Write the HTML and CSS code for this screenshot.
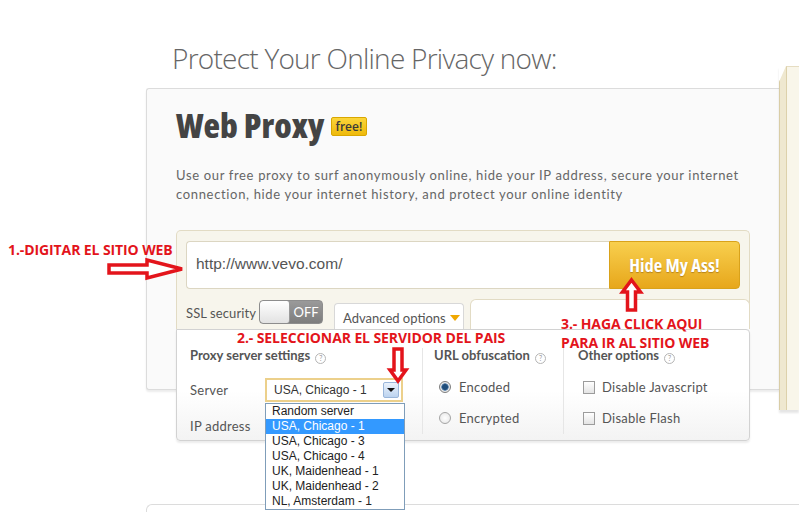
FILE: index.html
```html
<!DOCTYPE html>
<html lang="en">
<head>
  <meta charset="UTF-8" />
  <meta name="viewport" content="width=device-width, initial-scale=1.0" />
  <title>Web Proxy | Protect Your Online Privacy</title>
  <link rel="stylesheet" href="styles.css">
</head>
<body>
  <div class="page">
    <div class="stage">
      <div class="main-col">
        <h2 class="tagline">Protect Your Online Privacy now:</h2>

        <section class="proxy-panel">
          <h1 class="proxy-title">Web Proxy<span class="badge">free!</span></h1>
          <p class="intro">Use our free proxy to surf anonymously online, hide your IP address, secure your internet<br>connection, hide your internet history, and protect your online identity</p>

          <form class="surf-box">
            <div class="url-row">
              <input class="url-input" type="text" value="http://www.vevo.com/" />
              <button class="go-btn" type="button">Hide My Ass!</button>
            </div>
            <div class="option-row">
              <span class="ssl-label">SSL security</span>
              <span class="toggle"><span class="knob"></span><span class="off">OFF</span></span>
              <span class="adv-tab">Advanced options <span class="caret"></span></span>
              <span class="tab-fill"></span>
            </div>
          </form>

          <div class="settings">
            <div class="col col-server">
              <h4>Proxy server settings <i class="help">?</i></h4>
              <div class="field">
                <span class="field-label">Server</span>
                <div class="select">
                  <span>USA, Chicago - 1</span>
                  <span class="drop-btn"></span>
                  <ul class="menu">
                    <li>Random server</li>
                    <li class="active">USA, Chicago - 1</li>
                    <li>USA, Chicago - 3</li>
                    <li>USA, Chicago - 4</li>
                    <li>UK, Maidenhead - 1</li>
                    <li>UK, Maidenhead - 2</li>
                    <li>NL, Amsterdam - 1</li>
                  </ul>
                </div>
              </div>
              <div class="field field-ip">
                <span class="field-label">IP address</span>
              </div>
            </div>
            <div class="col col-url">
              <h4>URL obfuscation <i class="help">?</i></h4>
              <div class="opt"><span class="radio checked"></span>Encoded</div>
              <div class="opt"><span class="radio"></span>Encrypted</div>
            </div>
            <div class="col col-other">
              <h4>Other options <i class="help">?</i></h4>
              <div class="opt"><span class="check"></span>Disable Javascript</div>
              <div class="opt"><span class="check"></span>Disable Flash</div>
            </div>
          </div>
        </section>
      </div>

      <div class="side-card">
        <span class="side-edge"></span>
        <span class="side-face"></span>
      </div>
    </div>

    <section class="works">
      <h2>How it works</h2>
    </section>

    <!-- red notes drawn over the screenshot -->
    <div class="note note-1">1.-DIGITAR EL SITIO WEB</div>
    <svg class="arrow arrow-1" width="82" height="26" viewBox="0 0 82 26">
      <path d="M4 9 H42 V4 L77 13 L42 22 V17 H4 Z" />
    </svg>

    <div class="note note-2">2.- SELECCIONAR EL SERVIDOR DEL PAIS</div>
    <svg class="arrow arrow-2" width="24" height="40" viewBox="0 0 24 40">
      <path d="M8 4 H16 V25 H20 L12 36 L4 25 H8 Z" />
    </svg>

    <div class="note note-3">3.- HAGA CLICK AQUI<br>PARA IR AL SITIO WEB</div>
    <svg class="arrow arrow-3" width="27" height="38" viewBox="0 0 27 38">
      <path d="M13.5 4 L22.5 16 H17.5 V34 H9.5 V16 H4.5 Z" />
    </svg>
  </div>
</body>
</html>
```

FILE: styles.css
```css
:root {
  --text: #555;
  --muted: #666;
  --line: #dcdcdc;
  --beige: #f7f5ec;
  --beige-line: #e2dbc4;
  --gold-top: #f8cf4e;
  --gold-bottom: #e7a71b;
  --note-red: #e3141b;
}

body {
  margin: 0;
  background: #fff;
  font-family: 'Lato', 'Open Sans', sans-serif;
  color: var(--text);
  overflow: hidden;
}

.page {
  position: relative;
  width: 799px;
  height: 512px;
  padding-left: 146px;
  box-sizing: border-box;
  overflow: hidden;
}

.stage {
  display: flex;
  align-items: flex-start;
}

.main-col {
  width: 633px;
  flex: none;
}

.tagline {
  margin: 0 0 12px;
  padding: 40px 0 0 26px;
  font-family: 'Open Sans', sans-serif;
  font-weight: 300;
  font-size: 28px;
  line-height: 36px;
  letter-spacing: -0.75px;
  color: #666;
}

.proxy-panel {
  height: 302px;
  box-sizing: border-box;
  padding: 16px 0 0 29px;
  background: #fafafa;
  border: 1px solid var(--line);
  border-right: none;
  border-radius: 3px 0 0 3px;
  box-shadow: 0 2px 2px rgba(0, 0, 0, 0.08);
}

.proxy-title {
  margin: 0;
  font-family: 'Open Sans', sans-serif;
  font-stretch: 75%;
  font-weight: 800;
  font-size: 34px;
  line-height: 40px;
  color: #444;
}

.badge {
  display: inline-block;
  margin-left: 6px;
  padding: 0 4px;
  height: 17px;
  line-height: 17px;
  font-family: 'Open Sans', sans-serif;
  font-stretch: 100%;
  font-size: 12px;
  font-weight: 600;
  color: #3a3a3a;
  background: linear-gradient(#fbd53a, #eeb90b);
  border: 1px solid #d9a700;
  border-radius: 2px;
  vertical-align: 7px;
}

.intro {
  margin: 21px 0 0;
  font-size: 13px;
  line-height: 19px;
  color: var(--muted);
  letter-spacing: 0.66px;
}

.surf-box {
  width: 574px;
  box-sizing: border-box;
  margin-top: 26px;
  padding: 10px 9px 0;
  background: var(--beige);
  border: 1px solid var(--beige-line);
  border-bottom: none;
  border-radius: 5px 5px 0 0;
}

.url-row {
  display: flex;
  height: 48px;
}

.url-input {
  width: 423px;
  box-sizing: border-box;
  padding: 0 0 2px 9px;
  border: 1px solid #dcd6c2;
  border-right: none;
  border-radius: 4px 0 0 4px;
  background: #fff;
  font-family: 'Liberation Sans', Arial, sans-serif;
  font-size: 15.5px;
  color: #555;
  outline: none;
}

.go-btn {
  flex: 1;
  border: 1px solid #d9a21a;
  border-radius: 0 4px 4px 0;
  background: linear-gradient(var(--gold-top), var(--gold-bottom));
  font-family: 'Open Sans', sans-serif;
  font-stretch: 75%;
  font-size: 18.5px;
  font-weight: bold;
  color: #fff;
  text-shadow: 0 1px 1px rgba(120, 70, 0, 0.45);
  padding: 0 0 2px;
}

.option-row {
  display: flex;
  align-items: flex-end;
  height: 40px;
}

.ssl-label {
  margin-bottom: 8px;
  font-size: 13px;
  line-height: 16px;
  letter-spacing: 0.1px;
}

.toggle {
  display: flex;
  width: 64px;
  height: 24px;
  box-sizing: border-box;
  margin: 0 0 5px 3px;
  border: 1px solid #8d8d8d;
  border-radius: 4px;
  background: linear-gradient(#9a9a9a, #7d7d7d);
  overflow: hidden;
}

.knob {
  width: 29px;
  background: linear-gradient(#ffffff, #e2e2e2);
  border-right: 1px solid #9a9a9a;
  border-radius: 3px;
}

.off {
  flex: 1;
  text-align: center;
  font-size: 13px;
  line-height: 22px;
  color: #fff;
}

.adv-tab {
  position: relative;
  top: 1px;
  z-index: 1;
  display: flex;
  align-items: center;
  width: 130px;
  height: 27px;
  box-sizing: border-box;
  margin-left: 11px;
  padding: 2px 0 0 8px;
  background: #fff;
  border: 1px solid #d8d8d8;
  border-bottom: none;
  border-radius: 4px 4px 0 0;
  font-size: 13px;
  letter-spacing: 0;
  white-space: nowrap;
}

.caret {
  margin-left: 4px;
  border-left: 5px solid transparent;
  border-right: 5px solid transparent;
  border-top: 6px solid #f0a800;
}

.tab-fill {
  flex: 1;
  height: 30px;
  box-sizing: border-box;
  margin: 0 -10px 0 6px;
  background: #fff;
  border: 1px solid var(--beige-line);
  border-bottom: none;
  border-radius: 6px 6px 0 0;
}

.settings {
  position: relative;
  z-index: 2;
  display: grid;
  grid-template-columns: 245px 141px 1fr;
  width: 574px;
  height: 112px;
  box-sizing: border-box;
  padding: 18px 0 9px;
  background: linear-gradient(#fff 55%, #f3f3f3);
  border: 1px solid #d2d2d2;
  border-radius: 0 4px 4px 4px;
  box-shadow: 0 2px 2px rgba(0, 0, 0, 0.08);
}

.col {
  padding-left: 13px;
  font-size: 13px;
  letter-spacing: 0.25px;
}

.col-url {
  padding-left: 11px;
  border-left: 1px solid #e6e6e6;
}

.col-other {
  padding-left: 14px;
  border-left: 1px solid #e6e6e6;
}

.col h4 {
  margin: 0;
  font-size: 13px;
  line-height: 14px;
  font-weight: bold;
  letter-spacing: 0;
  color: #555;
}

.help {
  display: inline-block;
  width: 9px;
  height: 9px;
  margin-left: 2px;
  border: 1px solid #b5b5b5;
  border-radius: 50%;
  font-style: normal;
  font-weight: normal;
  font-size: 7px;
  line-height: 9px;
  text-align: center;
  letter-spacing: 0;
  color: #999;
  vertical-align: -1px;
}

.field {
  display: flex;
  align-items: center;
  margin-top: 14px;
}

.field-label {
  width: 75px;
  line-height: 16px;
}

.field-ip {
  margin-top: 16px;
}

.select {
  position: relative;
  display: flex;
  align-items: center;
  justify-content: space-between;
  width: 138px;
  height: 24px;
  box-sizing: border-box;
  padding: 0 2px 0 7px;
  border: 2px solid #ecd08b;
  background: #fff;
  font-family: 'Liberation Sans', Arial, sans-serif;
  font-size: 12px;
  letter-spacing: 0;
  color: #333;
}

.drop-btn {
  position: relative;
  width: 16px;
  height: 16px;
  box-sizing: border-box;
  border: 1px solid #9ab6da;
  border-radius: 2px;
  background: linear-gradient(#eaf2fc, #bcd3ef);
}

.drop-btn::after {
  content: "";
  position: absolute;
  left: 3px;
  top: 5px;
  border-left: 4px solid transparent;
  border-right: 4px solid transparent;
  border-top: 4px solid #111;
}

.menu {
  position: absolute;
  top: 23px;
  left: -2px;
  width: 140px;
  box-sizing: border-box;
  margin: 0;
  padding: 0;
  list-style: none;
  background: #fff;
  border: 1px solid #7f9db9;
}

.menu li {
  height: 15px;
  padding-left: 6px;
  line-height: 15px;
  color: #222;
}

.menu li.active {
  background: #3399ff;
  color: #fff;
}

.opt {
  display: flex;
  align-items: center;
  margin: 15px 0 0 5px;
  line-height: 16px;
}

.opt + .opt {
  margin-top: 15px;
}

.radio {
  width: 12px;
  height: 12px;
  box-sizing: border-box;
  margin-right: 8px;
  border: 1px solid #a5a5a5;
  border-radius: 50%;
  background: radial-gradient(#fff, #e4e4e4);
}

.radio.checked {
  border-color: #7d7d7d;
  background: radial-gradient(circle, #1f4d7a 0 2.5px, #6f93b8 3.5px, #e9e9e9 4px);
}

.check {
  width: 12px;
  height: 13px;
  box-sizing: border-box;
  margin-right: 7px;
  border: 1px solid #9c9c9c;
  background: linear-gradient(#ffffff, #e4e4e4);
}

.side-card {
  flex: 1;
  display: flex;
  height: 344px;
  margin-top: 66px;
  box-shadow: 0 3px 2px rgba(0, 0, 0, 0.1);
}

.side-edge {
  width: 6px;
  background: #efe8d0;
  border-left: 1px solid #d9cda6;
  clip-path: polygon(0 16px, 100% 0, 100% 100%, 0 100%);
}

.side-face {
  flex: 1;
  background: #f9f6ea;
  border-left: 1px solid #ddd1ab;
  border-top: 1px solid #e6ddc2;
}

.works {
  width: 700px;
  height: 60px;
  margin-top: 94px;
  border-top: 1px solid var(--line);
  border-left: 1px solid var(--line);
  border-radius: 6px 0 0 0;
}

.works h2 {
  margin: 0;
  padding: 13px 0 0 376px;
  font-family: 'Open Sans', sans-serif;
  font-stretch: 75%;
  font-weight: 800;
  font-size: 36px;
  line-height: 40px;
  color: #333;
}

.note {
  position: absolute;
  z-index: 5;
  font-family: 'Open Sans', sans-serif;
  font-weight: bold;
  font-size: 14px;
  line-height: 19px;
  letter-spacing: -0.1px;
  color: var(--note-red);
  white-space: nowrap;
}

.note-1 { left: 8px; top: 240px; }
.note-2 { left: 237px; top: 328px; }
.note-3 { left: 561px; top: 314px; }

.arrow {
  position: absolute;
  z-index: 5;
}

.arrow path {
  fill: #fff;
  stroke: var(--note-red);
  stroke-width: 3.5;
  stroke-linejoin: miter;
}

.arrow-1 { left: 105px; top: 256px; }
.arrow-2 { left: 386px; top: 345px; }
.arrow-3 { left: 618px; top: 276px; }
```
